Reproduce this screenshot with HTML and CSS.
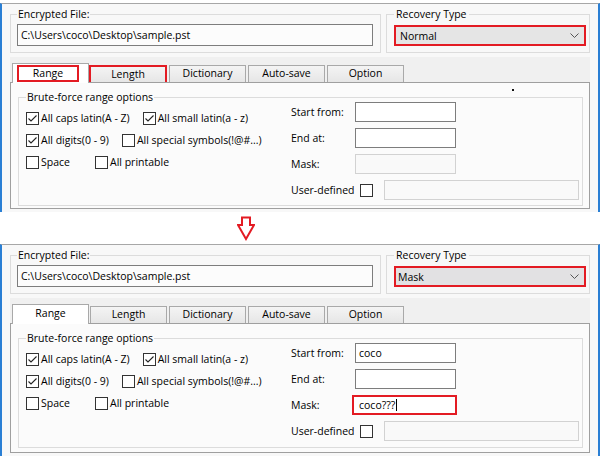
FILE: index.html
```html
<!DOCTYPE html>
<html>
<head>
<meta charset="utf-8">
<link rel="stylesheet" href="styles.css">
</head>
<body>
<div class="win win-top">
  <div class="top-row">
    <fieldset class="gb gb-file">
      <legend>Encrypted File:</legend>
      <div class="tb tb-file">C:\Users\coco\Desktop\sample.pst</div>
    </fieldset>
    <fieldset class="gb gb-type">
      <legend>Recovery Type</legend>
      <div class="combo"><span>Normal</span><svg width="9" height="5" viewBox="0 0 9 5"><path d="M0.5 0.5 L4.5 4.5 L8.5 0.5" fill="none" stroke="#555"/></svg></div>
    </fieldset>
  </div>
  <div class="tabstrip">
    <div class="tab active"><span class="tab-mark">Range</span></div>
    <div class="tab first hl">Length</div>
    <div class="tab">Dictionary</div>
    <div class="tab">Auto-save</div>
    <div class="tab">Option</div>
  </div>
  <div class="panel">
    <span class="speck"></span>
    <fieldset class="gb gb-brute">
      <legend>Brute-force range options</legend>
      <div class="brute">
        <div class="checks">
          <div class="cbrow">
            <label class="cb"><span class="box"><svg width="11" height="11" viewBox="0 0 11 11"><path d="M1.5 5.5 L4 8 L9.5 2.5" fill="none" stroke="#222" stroke-width="1.1"/></svg></span>All caps latin(A - Z)</label>
            <label class="cb"><span class="box"><svg width="11" height="11" viewBox="0 0 11 11"><path d="M1.5 5.5 L4 8 L9.5 2.5" fill="none" stroke="#222" stroke-width="1.1"/></svg></span>All small latin(a - z)</label>
          </div>
          <div class="cbrow">
            <label class="cb"><span class="box"><svg width="11" height="11" viewBox="0 0 11 11"><path d="M1.5 5.5 L4 8 L9.5 2.5" fill="none" stroke="#222" stroke-width="1.1"/></svg></span>All digits(0 - 9)</label>
            <label class="cb"><span class="box"></span>All special symbols(!@#...)</label>
          </div>
          <div class="cbrow">
            <label class="cb cb-space"><span class="box"></span>Space</label>
            <label class="cb"><span class="box"></span>All printable</label>
          </div>
        </div>
        <div class="fields">
          <div class="frow"><span class="flabel">Start from:</span><div class="tb"></div></div>
          <div class="frow"><span class="flabel">End at:</span><div class="tb"></div></div>
          <div class="frow"><span class="flabel">Mask:</span><div class="tb off"></div></div>
          <div class="frow"><span class="flabel user">User-defined</span><span class="box"></span><div class="tb off wide"></div></div>
        </div>
      </div>
    </fieldset>
  </div>
</div>

<div class="divider">
  <svg width="18" height="26" viewBox="0 0 18 26"><path d="M5 2.5 H13 V10 H17 L9 24 L1 10 H5 Z" fill="#fff" stroke="#e31b23" stroke-width="2"/></svg>
</div>

<div class="win win-bottom">
  <div class="top-row">
    <fieldset class="gb gb-file">
      <legend>Encrypted File:</legend>
      <div class="tb tb-file">C:\Users\coco\Desktop\sample.pst</div>
    </fieldset>
    <fieldset class="gb gb-type">
      <legend>Recovery Type</legend>
      <div class="combo combo-mask"><span>Mask</span><svg width="9" height="5" viewBox="0 0 9 5"><path d="M0.5 0.5 L4.5 4.5 L8.5 0.5" fill="none" stroke="#555"/></svg></div>
    </fieldset>
  </div>
  <div class="tabstrip">
    <div class="tab active">Range</div>
    <div class="tab first">Length</div>
    <div class="tab">Dictionary</div>
    <div class="tab">Auto-save</div>
    <div class="tab">Option</div>
  </div>
  <div class="panel">
    <fieldset class="gb gb-brute">
      <legend>Brute-force range options</legend>
      <div class="brute">
        <div class="checks">
          <div class="cbrow">
            <label class="cb"><span class="box"><svg width="11" height="11" viewBox="0 0 11 11"><path d="M1.5 5.5 L4 8 L9.5 2.5" fill="none" stroke="#222" stroke-width="1.1"/></svg></span>All caps latin(A - Z)</label>
            <label class="cb"><span class="box"><svg width="11" height="11" viewBox="0 0 11 11"><path d="M1.5 5.5 L4 8 L9.5 2.5" fill="none" stroke="#222" stroke-width="1.1"/></svg></span>All small latin(a - z)</label>
          </div>
          <div class="cbrow">
            <label class="cb"><span class="box"><svg width="11" height="11" viewBox="0 0 11 11"><path d="M1.5 5.5 L4 8 L9.5 2.5" fill="none" stroke="#222" stroke-width="1.1"/></svg></span>All digits(0 - 9)</label>
            <label class="cb"><span class="box"></span>All special symbols(!@#...)</label>
          </div>
          <div class="cbrow">
            <label class="cb cb-space"><span class="box"></span>Space</label>
            <label class="cb"><span class="box"></span>All printable</label>
          </div>
        </div>
        <div class="fields">
          <div class="frow"><span class="flabel">Start from:</span><div class="tb">coco</div></div>
          <div class="frow"><span class="flabel">End at:</span><div class="tb"></div></div>
          <div class="frow"><span class="flabel">Mask:</span><div class="tb tb-hl">coco???<span class="caret"></span></div></div>
          <div class="frow"><span class="flabel user">User-defined</span><span class="box"></span><div class="tb off wide"></div></div>
        </div>
      </div>
    </fieldset>
  </div>
</div>
</body>
</html>
```

FILE: styles.css
```css
* { box-sizing: border-box; }
html, body { margin: 0; padding: 0; background: #fff; }
body {
  width: 600px;
  height: 456px;
  overflow: hidden;
  font-family: "Open Sans", "Noto Sans", sans-serif;
  font-size: 10.5px;
  color: #000;
}

.win {
  width: 600px;
  border-top: 1px solid #a7a7a7;
  border-left: 2px solid #2a7fd4;
  border-right: 2px solid #2a7fd4;
  background: #f8f8f8;
  padding: 3px 8px 0 8px;
}
.win-top { margin-top: 3px; height: 209px; }
.win-bottom { height: 212px; }

.top-row { display: flex; gap: 5px; }

.gb {
  margin: 0;
  border: 1px solid #dcdcdc;
  padding: 3px 7px 6px 6px;
  min-width: 0;
}
.gb legend { padding: 0 1px; line-height: 14px; }
.gb-file { width: 371px; }
.gb-type { width: 204px; padding-left: 7px; padding-right: 3px; }
.gb-type legend { padding: 0 2px; }

.tb {
  width: 101px;
  height: 20px;
  border: 1px solid #7d7d7d;
  background: #fff;
  padding: 0 3px;
  display: flex;
  align-items: center;
  white-space: nowrap;
}
.tb-file { width: auto; height: 22px; background: #fcfcfc; padding-left: 3px; }
.tb.off { border-color: #d2d2d2; background: #f9f9f9; }
.tb.wide { width: 195px; margin-left: 11px; }
.tb-hl { border: 2px solid #e31b23; margin-left: -3px; width: 105px; padding-left: 5px; }
.caret { display: inline-block; width: 1px; height: 12px; background: #000; margin-left: 1px; }

.combo {
  margin-top: 1px;
  height: 21px;
  border: 2px solid #e31b23;
  background: #e5e5e5;
  padding: 0 5px 0 4px;
  display: flex;
  align-items: center;
  justify-content: space-between;
}
.combo-mask { padding-left: 2px; background: #e2e1e3; }

.tabstrip {
  margin-top: 4px;
  height: 25px;
  background: #f0f0f0;
  display: flex;
  align-items: flex-end;
  padding-left: 2px;
}
.tab {
  width: 77px;
  height: 17px;
  margin-left: 2px;
  padding-bottom: 2px;
  border: 1px solid #a9a9a9;
  border-bottom: none;
  background: linear-gradient(#f4f4f4, #e6e6e6);
  display: flex;
  align-items: center;
  justify-content: center;
  white-space: nowrap;
}
.tab.first { margin-left: 1px; }
.tab.active {
  height: 20px;
  margin-left: 0;
  margin-bottom: -1px;
  padding-bottom: 3px;
  background: #fff;
  position: relative;
  z-index: 1;
}
.win-top .tab.active { display: block; padding-bottom: 0; }
.tab-mark {
  display: flex;
  align-items: center;
  justify-content: center;
  width: 62px;
  height: 17px;
  padding-bottom: 2px;
  margin: 1px 0 0 4px;
  border: 2px solid #e31b23;
}
.tab.hl { border: 2px solid #e31b23; border-bottom: none; margin-left: 0; width: 78px; padding-bottom: 1px; }

.panel {
  position: relative;
  height: 127px;
  border: 1px solid #9f9f9f;
  background: #fbfbfb;
  padding: 7px 6px 0 7px;
}
.win-bottom .panel { height: 130px; }
.speck { position: absolute; left: 501px; top: 6px; width: 2px; height: 2px; background: #111; }

.gb-brute { height: 116px; padding: 3px 3px 0 7px; }
.win-bottom .gb-brute { height: 117px; }

.brute { display: grid; grid-template-columns: 265px 1fr; }

.cbrow { display: flex; align-items: center; height: 22px; gap: 13px; }
.cb { display: flex; align-items: center; gap: 2px; white-space: nowrap; }
.cb-space { width: 56px; }
.box {
  width: 13px;
  height: 13px;
  flex: none;
  border: 1px solid #333;
  background: #fff;
  display: flex;
  align-items: center;
  justify-content: center;
}

.fields { margin-top: -5px; }
.frow { display: flex; align-items: center; height: 20px; }
.frow + .frow { margin-top: 6px; }
.flabel { width: 64px; flex: none; white-space: nowrap; }
.flabel.user { width: 69px; }

.divider { height: 32px; padding: 3px 0 0 237px; }
.divider svg { display: block; }
```
